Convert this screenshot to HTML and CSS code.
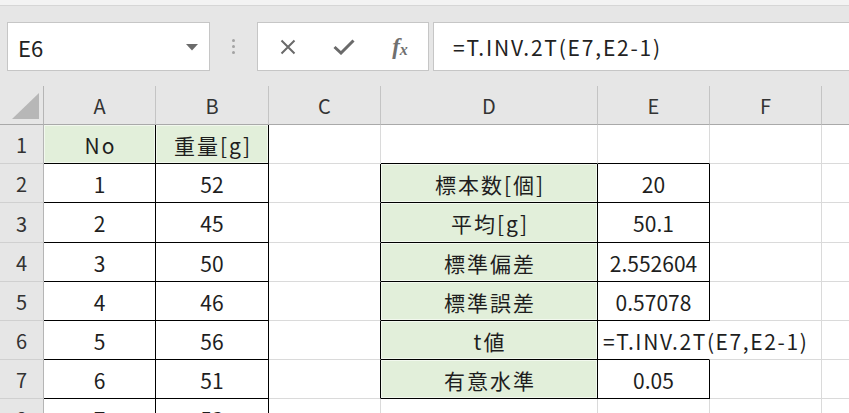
FILE: index.html
```html
<!DOCTYPE html>
<html lang="ja">
<head>
<meta charset="utf-8">
<title>Excel</title>
<link rel="stylesheet" href="styles.css">
</head>
<body>
<div class="topstrip"></div>
<div class="toolbar">
  <div class="namebox">
    <span>E6</span>
    <svg class="dd" width="12" height="7" viewBox="0 0 12 7"><polygon points="0,0 12,0 6,6.5" fill="#6b6b6b"/></svg>
  </div>
  <div class="sep"><i></i><i></i><i></i></div>
  <div class="fbtns">
    <span class="btn"><svg width="16" height="16" viewBox="0 0 16 16"><path d="M1.5 1.5 L14.5 14.5 M14.5 1.5 L1.5 14.5" stroke="#6a6a6a" stroke-width="2" fill="none"/></svg></span>
    <span class="btn"><svg width="22" height="16" viewBox="0 0 22 16"><path d="M1.5 8 L8 14 L20.5 1.5" stroke="#6a6a6a" stroke-width="3" fill="none"/></svg></span>
    <span class="btn fx"><span class="fx-f">f</span><span class="fx-x">x</span></span>
  </div>
  <div class="fbar">=T.INV.2T(E7,E2-1)</div>
</div>
<div class="sheet">
  <div class="c corner"><svg width="27" height="26" viewBox="0 0 27 26"><polygon points="0,26 27,26 27,0" fill="#b7b7b7"/></svg></div>
  <div class="c ch">A</div><div class="c ch">B</div><div class="c ch">C</div><div class="c ch">D</div><div class="c ch">E</div><div class="c ch">F</div><div class="c ch last"></div>

  <div class="c rh">1</div>
  <div class="c g rb bb">No</div><div class="c g rb bb">重量[g]</div><div class="c"></div><div class="c bb"></div><div class="c bb"></div><div class="c"></div><div class="c last"></div>

  <div class="c rh">2</div>
  <div class="c rb bb">1</div><div class="c rb bb">52</div><div class="c rb"></div><div class="c g rb bb">標本数[個]</div><div class="c rb bb">20</div><div class="c"></div><div class="c last"></div>

  <div class="c rh">3</div>
  <div class="c rb bb">2</div><div class="c rb bb">45</div><div class="c rb"></div><div class="c g rb bb">平均[g]</div><div class="c rb bb">50.1</div><div class="c"></div><div class="c last"></div>

  <div class="c rh">4</div>
  <div class="c rb bb">3</div><div class="c rb bb">50</div><div class="c rb"></div><div class="c g rb bb">標準偏差</div><div class="c rb bb">2.552604</div><div class="c"></div><div class="c last"></div>

  <div class="c rh">5</div>
  <div class="c rb bb">4</div><div class="c rb bb">46</div><div class="c rb"></div><div class="c g rb bb">標準誤差</div><div class="c rb bb">0.57078</div><div class="c"></div><div class="c last"></div>

  <div class="c rh">6</div>
  <div class="c rb bb">5</div><div class="c rb bb">56</div><div class="c rb"></div><div class="c g rb bb">t値</div><div class="c bb ov">=T.INV.2T(E7,E2-1)</div><div class="c"></div><div class="c last"></div>

  <div class="c rh">7</div>
  <div class="c rb bb">6</div><div class="c rb bb">51</div><div class="c rb"></div><div class="c g rb bb">有意水準</div><div class="c rb bb">0.05</div><div class="c"></div><div class="c last"></div>

  <div class="c rh">8</div>
  <div class="c rb bb">7</div><div class="c rb bb">53</div><div class="c"></div><div class="c"></div><div class="c"></div><div class="c"></div><div class="c last"></div>
</div>
</body>
</html>
```
FILE: styles.css
```css
* { box-sizing: border-box; }
html, body { margin: 0; padding: 0; }
body {
  width: 849px;
  height: 413px;
  overflow: hidden;
  background: #fff;
  font-family: "Noto Sans CJK JP", "Noto Sans", sans-serif;
}
.topstrip {
  height: 6px;
  background: #f3f3f3;
  border-bottom: 1px solid #d6d6d6;
}
.toolbar {
  height: 80px;
  background: #e6e6e6;
  display: flex;
  align-items: flex-start;
  padding: 16px 0 0 7px;
}
.namebox {
  width: 203px;
  height: 49px;
  background: #fff;
  border: 1px solid #c6c6c6;
  display: flex;
  align-items: center;
  justify-content: space-between;
  padding: 0 11px 0 10px;
  font-size: 22px;
  color: #222;
}
.dd { margin-top: 1px; }
.sep {
  width: 47px;
  height: 49px;
  display: flex;
  flex-direction: column;
  align-items: center;
  justify-content: center;
  gap: 3px;
}
.sep i {
  display: block;
  width: 3px;
  height: 3px;
  border-radius: 50%;
  background: #a3a3a3;
}
.fbtns {
  width: 172px;
  height: 49px;
  background: #fff;
  border: 1px solid #c6c6c6;
  display: flex;
  padding-left: 2px;
}
.btn {
  flex: 1;
  display: flex;
  align-items: center;
  justify-content: center;
}
.fx {
  font-family: "Liberation Serif", serif;
  font-style: italic;
  color: #707070;
  font-weight: bold;
}
.fx-f { font-size: 23px; }
.fx-x { font-size: 16px; margin-left: 0; margin-top: 6px; }
.fbar {
  flex: 1;
  margin-left: 4px;
  margin-right: -2px;
  height: 49px;
  background: #fff;
  border: 1px solid #c6c6c6;
  padding-left: 19px;
  display: flex;
  align-items: center;
  font-size: 21px;
  letter-spacing: 1.8px;
  color: #222;
  white-space: nowrap;
}
.sheet {
  display: grid;
  grid-template-columns: 44px 112px 113px 112px 217px 112px 112px 1fr;
  grid-template-rows: 39px 39px 39px 40px 39px 39px 39px 39px 39px;
}
.c {
  border-right: 1px solid #dadada;
  border-bottom: 1px solid #dadada;
  display: flex;
  align-items: center;
  justify-content: center;
  font-size: 21px;
  color: #1e1e1e;
  white-space: nowrap;
  padding-top: 1px;
}
.last { border-right: none; }
.ch {
  background: #e6e6e6;
  border-right-color: #c4c4c4;
  border-bottom-color: #a9a9a9;
  color: #333;
  font-size: 20px;
}
.corner {
  background: #e6e6e6;
  border-right-color: #b5b5b5;
  border-bottom-color: #a9a9a9;
  align-items: flex-end;
  justify-content: flex-end;
  padding: 0 4px 5px 0;
}
.rh {
  background: #e6e6e6;
  border-right-color: #b5b5b5;
  border-bottom-color: #d0d0d0;
  color: #333;
  font-size: 20px;
}
.g {
  background: #e2efda;
  box-shadow: inset 0 0 0 1px rgba(255, 255, 255, 0.55);
  letter-spacing: 2px;
  padding-left: 2px;
}
.rb { border-right-color: #000; }
.bb { border-bottom-color: #000; }
.ov {
  justify-content: flex-start;
  padding-left: 5px;
  letter-spacing: 1.6px;
  overflow: visible;
  border-right-color: transparent;
}
```
